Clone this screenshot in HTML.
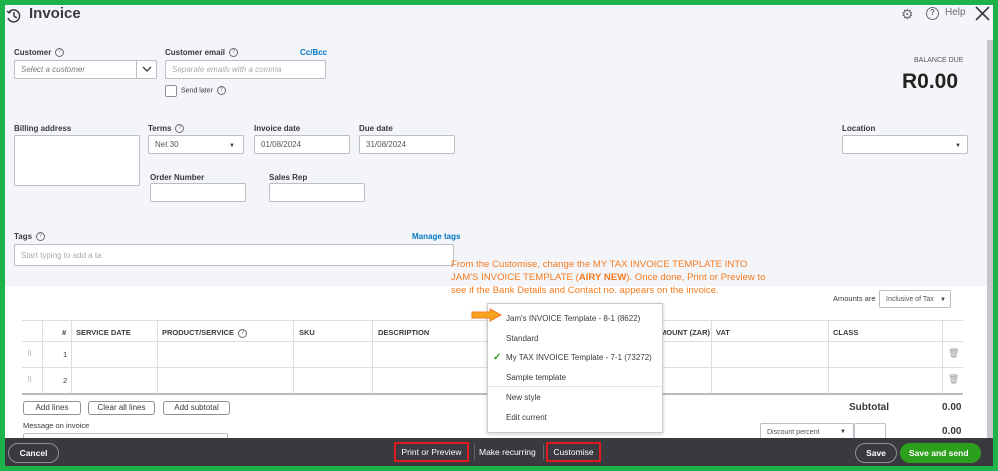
<!DOCTYPE html>
<html><head><style>
*{box-sizing:border-box;margin:0;padding:0}
body{width:998px;height:471px;background:#1eb34a;font-family:"Liberation Sans",sans-serif;position:relative;overflow:hidden;color:#393a3d}
.main{position:absolute;left:5px;top:5px;width:988px;height:461px;background:#f4f5f8;overflow:hidden}
.a{position:absolute}
.lbl{font-size:8px;font-weight:bold;color:#393a3d}
.inp{position:absolute;background:#fff;border:1px solid #babec5;border-radius:2px;font-size:8px;color:#555;padding:0 6px;display:flex;align-items:center}
.q{display:inline-block;width:9px;height:9px;border:1px solid #6b6c72;border-radius:50%;font-size:6px;text-align:center;line-height:7px;color:#6b6c72;font-weight:normal;margin-left:4px;vertical-align:middle}
.th{position:absolute;top:323px;font-size:7.5px;font-weight:bold}
.btn{position:absolute;background:#fff;border:1px solid #8d9096;border-radius:3px;font-size:8px;text-align:center;line-height:12px;height:14px}
.note{color:#f47b20;font-size:9.6px;line-height:13px}
.mi{position:absolute;left:18px;font-size:8px;color:#393a3d}
</style></head><body>
<div class="main">
 <svg class="a" style="left:1px;top:3px" width="16" height="16" viewBox="0 0 16 16"><path d="M3 4a6 6 0 1 1 -1 6" fill="none" stroke="#393a3d" stroke-width="1.5"/><path d="M8 4v4l3 2" fill="none" stroke="#393a3d" stroke-width="1.5"/><path d="M1 3l2 2 2-2" fill="none" stroke="#393a3d" stroke-width="1.3"/></svg>
 <div class="a" style="left:24px;top:0;font-size:15px;font-weight:bold;color:#393a3d">Invoice</div>
 <div class="a" style="left:896px;top:1px;font-size:14px;color:#6b6c72">⚙</div>
 <div class="a" style="left:921px;top:2px;width:13px;height:13px;border:1.5px solid #6b6c72;border-radius:50%;font-size:8px;text-align:center;line-height:10px;color:#6b6c72;font-weight:bold">?</div>
 <div class="a" style="left:940px;top:2px;font-size:10px;color:#6b6c72">Help</div>
 <svg class="a" style="left:970px;top:1px" width="15" height="15"><path d="M1 1L14 14M14 1L1 14" stroke="#393a3d" stroke-width="1.6"/></svg>
 <div class="a" style="left:982px;top:35px;width:6px;height:405px;background:#c5c6c9"></div>

 <div class="a lbl" style="left:9px;top:43px">Customer<span class="q">?</span></div>
 <div class="inp" style="left:9px;top:55px;width:143px;height:19px;font-style:italic;color:#777">Select a customer</div>
 <div class="a" style="left:131px;top:55px;width:1px;height:19px;background:#babec5"></div>
 <svg class="a" style="left:137px;top:61px" width="10" height="7"><path d="M1 1l4 4 4-4" fill="none" stroke="#393a3d" stroke-width="1.3"/></svg>
 <div class="a lbl" style="left:160px;top:43px">Customer email<span class="q">?</span></div>
 <div class="a" style="left:295px;top:43px;font-size:8px;font-weight:bold;color:#0077c5">Cc/Bcc</div>
 <div class="inp" style="left:160px;top:55px;width:161px;height:19px;font-style:italic;color:#aaa">Separate emails with a comma</div>
 <div class="a" style="left:160px;top:80px;width:12px;height:12px;background:#fff;border:1px solid #8d9096;border-radius:2px"></div>
 <div class="a" style="left:176px;top:81px;font-size:7px">Send later<span class="q">?</span></div>

 <div class="a" style="left:909px;top:52px;font-size:7px;color:#555">BALANCE DUE</div>
 <div class="a" style="left:897px;top:65px;font-size:21px;font-weight:bold;color:#222">R0.00</div>

 <div class="a lbl" style="left:9px;top:119px">Billing address</div>
 <div class="inp" style="left:9px;top:130px;width:126px;height:51px"></div>
 <div class="a lbl" style="left:143px;top:119px">Terms<span class="q">?</span></div>
 <div class="inp" style="left:143px;top:130px;width:96px;height:19px">Net 30</div>
 <div class="a" style="left:224px;top:138px;font-size:6px">▼</div>
 <div class="a lbl" style="left:249px;top:119px">Invoice date</div>
 <div class="inp" style="left:249px;top:130px;width:96px;height:19px">01/08/2024</div>
 <div class="a lbl" style="left:354px;top:119px">Due date</div>
 <div class="inp" style="left:354px;top:130px;width:96px;height:19px">31/08/2024</div>
 <div class="a lbl" style="left:145px;top:168px">Order Number</div>
 <div class="inp" style="left:145px;top:178px;width:96px;height:19px"></div>
 <div class="a lbl" style="left:264px;top:168px">Sales Rep</div>
 <div class="inp" style="left:264px;top:178px;width:96px;height:19px"></div>
 <div class="a lbl" style="left:837px;top:119px">Location</div>
 <div class="inp" style="left:837px;top:130px;width:126px;height:19px"></div>
 <div class="a" style="left:950px;top:138px;font-size:6px">▼</div>

 <div class="a lbl" style="left:9px;top:227px">Tags<span class="q">?</span></div>
 <div class="a" style="left:407px;top:227px;font-size:8px;font-weight:bold;color:#0077c5">Manage tags</div>
 <div class="inp" style="left:9px;top:239px;width:440px;height:22px;color:#aaa">Start typing to add a ta</div>

 <div class="a" style="left:0;top:281px;width:982px;height:160px;background:#fff"></div>
 <div class="a note" style="left:446px;top:253px">From the Customise, change the MY TAX INVOICE TEMPLATE INTO<br>JAM'S INVOICE TEMPLATE (<b>AIRY NEW</b>). Once done, Print or Preview to<br>see if the Bank Details and Contact no. appears on the invoice.</div>

 <div class="a" style="left:828px;top:289px;font-size:7.5px">Amounts are</div>
 <div class="inp" style="left:874px;top:285px;width:72px;height:18px;font-size:7px">Inclusive of Tax</div>
 <div class="a" style="left:935px;top:292px;font-size:6px">▼</div>

 <div class="a" style="left:17px;top:315px;width:941px;height:1px;background:#ddd"></div>
 <div class="a" style="left:17px;top:336px;width:941px;height:1px;background:#ddd"></div>
 <div class="a" style="left:17px;top:362px;width:941px;height:1px;background:#ddd"></div>
 <div class="a" style="left:17px;top:388px;width:941px;height:1.5px;background:#bbb"></div>
 <div class="a" style="left:37px;top:315px;width:1px;height:73px;background:#ddd"></div>
 <div class="a" style="left:66px;top:315px;width:1px;height:73px;background:#ddd"></div>
 <div class="a" style="left:152px;top:315px;width:1px;height:73px;background:#ddd"></div>
 <div class="a" style="left:288px;top:315px;width:1px;height:73px;background:#ddd"></div>
 <div class="a" style="left:367px;top:315px;width:1px;height:73px;background:#ddd"></div>
 <div class="a" style="left:706px;top:315px;width:1px;height:73px;background:#ddd"></div>
 <div class="a" style="left:823px;top:315px;width:1px;height:73px;background:#ddd"></div>
 <div class="a" style="left:937px;top:315px;width:1px;height:73px;background:#ddd"></div>
 <div class="th" style="left:57px">#</div>
 <div class="th" style="left:71px">SERVICE DATE</div>
 <div class="th" style="left:157px">PRODUCT/SERVICE<span class="q">?</span></div>
 <div class="th" style="left:294px">SKU</div>
 <div class="th" style="left:373px">DESCRIPTION</div>
 <div class="th" style="left:655px">MOUNT (ZAR)</div>
 <div class="th" style="left:711px">VAT</div>
 <div class="th" style="left:828px">CLASS</div>
 <div class="a" style="left:22px;top:345px;font-size:7px;color:#999">⠿</div>
 <div class="a" style="left:22px;top:371px;font-size:7px;color:#999">⠿</div>
 <div class="a" style="left:58px;top:345px;font-size:7.5px">1</div>
 <div class="a" style="left:58px;top:371px;font-size:7.5px">2</div>
 <div class="a" style="left:943px;top:343px;font-size:9px;color:#999">🗑</div>
 <div class="a" style="left:943px;top:369px;font-size:9px;color:#999">🗑</div>

 <div class="btn" style="left:18px;top:396px;width:58px">Add lines</div>
 <div class="btn" style="left:83px;top:396px;width:67px">Clear all lines</div>
 <div class="btn" style="left:158px;top:396px;width:67px">Add subtotal</div>
 <div class="a" style="left:18px;top:416px;font-size:7.5px">Message on invoice</div>
 <div class="inp" style="left:18px;top:428px;width:205px;height:14px"></div>
 <div class="a" style="left:844px;top:397px;font-size:10px;font-weight:bold">Subtotal</div>
 <div class="a" style="left:937px;top:397px;font-size:10px;font-weight:bold">0.00</div>
 <div class="inp" style="left:755px;top:418px;width:94px;height:18px;font-size:7px">Discount percent</div>
 <div class="a" style="left:835px;top:424px;font-size:6px">▼</div>
 <div class="inp" style="left:849px;top:418px;width:32px;height:18px"></div>
 <div class="a" style="left:937px;top:421px;font-size:10px;font-weight:bold">0.00</div>

 <div class="a" style="left:482px;top:298px;width:176px;height:130px;background:#fff;border:1px solid #ccc;box-shadow:0 1px 4px rgba(0,0,0,.2)">
  <div class="mi" style="top:10px">Jam's INVOICE Template - 8-1 (8622)</div>
  <div class="mi" style="top:30px">Standard</div>
  <div class="a" style="left:5px;top:48px;color:#2ca01c;font-size:10px;font-weight:bold">✓</div>
  <div class="mi" style="top:49px">My TAX INVOICE Template - 7-1 (73272)</div>
  <div class="mi" style="top:69px">Sample template</div>
  <div class="a" style="left:0;top:82px;width:174px;height:1px;background:#e3e3e3"></div>
  <div class="mi" style="top:89px">New style</div>
  <div class="mi" style="top:109px">Edit current</div>
 </div>
 <svg class="a" style="left:466px;top:303px" width="32" height="14"><path d="M1 4h18V1l11 6-11 6V10H1z" fill="#f7a520" stroke="#f47b20" stroke-width="1"/></svg>

 <div class="a" style="left:0;top:433px;width:988px;height:28px;background:#393a3d"></div>
 <div class="a" style="left:3px;top:438px;width:51px;height:20px;border:1px solid #8d9096;border-radius:10px;color:#fff;font-size:8.5px;font-weight:bold;text-align:center;line-height:18px">Cancel</div>
 <div class="a" style="left:389px;top:437px;width:75px;height:20px;border:2px solid #e01b22;color:#fff;font-size:8.5px;text-align:center;line-height:16px">Print or Preview</div>
 <div class="a" style="left:469px;top:439px;width:1px;height:16px;background:#666"></div>
 <div class="a" style="left:474px;top:442px;color:#fff;font-size:8.5px">Make recurring</div>
 <div class="a" style="left:538px;top:439px;width:1px;height:16px;background:#666"></div>
 <div class="a" style="left:541px;top:437px;width:55px;height:20px;border:2px solid #e01b22;color:#fff;font-size:8.5px;text-align:center;line-height:16px">Customise</div>
 <div class="a" style="left:850px;top:438px;width:42px;height:20px;border:1px solid #8d9096;border-radius:10px;color:#fff;font-size:8.5px;font-weight:bold;text-align:center;line-height:18px">Save</div>
 <div class="a" style="left:895px;top:438px;width:81px;height:20px;background:#2ca01c;border-radius:10px;color:#fff;font-size:8.5px;font-weight:bold;line-height:20px;padding-left:9px">Save and send <span style="font-size:6px;margin-left:6px">▼</span></div>
</div>
</body></html>
